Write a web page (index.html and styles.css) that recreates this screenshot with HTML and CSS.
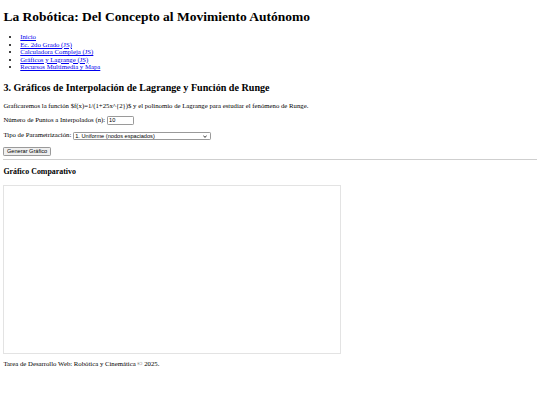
FILE: index.html
```html
<!DOCTYPE html>
<html lang="es">
<head>
<meta charset="utf-8">
<title>La Robótica</title>
<link rel="stylesheet" href="styles.css">
</head>
<body>
<header>
  <h1 class="title">La Robótica: Del Concepto al Movimiento Autónomo</h1>
  <nav>
    <ul class="nav-list">
      <li><a href="#">Inicio</a></li>
      <li><a href="#">Ec. 2do Grado (JS)</a></li>
      <li><a href="#">Calculadora Compleja (JS)</a></li>
      <li><a href="#">Gráficos y Lagrange (JS)</a></li>
      <li><a href="#">Recursos Multimedia y Mapa</a></li>
    </ul>
  </nav>
</header>
<main>
  <section>
    <h2 class="section-title">3. Gráficos de Interpolación de Lagrange y Función de Runge</h2>
    <p class="text">Graficaremos la función $f(x)=1/(1+25x^{2})$ y el polinomio de Lagrange para estudiar el fenómeno de Runge.</p>
    <p class="text">
      <label for="n">Número de Puntos a Interpolados (n):</label>
      <input class="num-input" id="n" type="text" value="10">
    </p>
    <p class="text">
      <label for="tipo">Tipo de Parametrización:</label>
      <select class="select" id="tipo">
        <option>1. Uniforme (nodos espaciados)</option>
      </select>
    </p>
    <button class="btn" type="button">Generar Gráfico</button>
    <hr class="rule">
    <h3 class="sub-title">Gráfico Comparativo</h3>
    <div class="canvas"></div>
  </section>
</main>
<footer>
  <p class="text">Tarea de Desarrollo Web: Robótica y Cinemática © 2025.</p>
</footer>
</body>
</html>
```
FILE: styles.css
```css
html {
  background: #fff;
}
body {
  margin: 3.375px;
  font-family: "Liberation Serif", "Times New Roman", serif;
  font-size: 6.75px;
  line-height: 1.107;
  color: #000;
}
.title {
  font-size: 13.5px;
  font-weight: bold;
  margin: 7px 0 8px;
}
.nav-list {
  margin: 6.75px 0;
  padding-left: 16.875px;
  list-style: disc;
}
.nav-list a {
  color: #0000ee;
  text-decoration: underline;
}
.section-title {
  font-size: 10.125px;
  font-weight: bold;
  margin: 11.4px 0 8.4px;
}
.text {
  margin: 6.75px 0;
}
.num-input {
  box-sizing: border-box;
  width: 27px;
  height: 8.6px;
  padding: 0 1.2px;
  border: 0.6px solid #9a9a9a;
  border-radius: 1.2px;
  font-family: "Liberation Sans", Arial, sans-serif;
  font-size: 5.625px;
  line-height: 1.15;
  vertical-align: middle;
}
.select {
  box-sizing: border-box;
  width: 138px;
  height: 8.2px;
  padding: 0 8px 0 1.2px;
  border: 0.6px solid #9a9a9a;
  border-radius: 1.2px;
  background-color: #fff;
  background-image: url("data:image/svg+xml,%3Csvg xmlns='http://www.w3.org/2000/svg' viewBox='0 0 10 6'%3E%3Cpath d='M1 1l4 4 4-4' fill='none' stroke='%23000' stroke-width='1.8'/%3E%3C/svg%3E");
  background-repeat: no-repeat;
  background-position: right 3.3px center;
  background-size: 4px 2.6px;
  appearance: none;
  -webkit-appearance: none;
  font-family: "Liberation Sans", Arial, sans-serif;
  font-size: 5.625px;
  line-height: 1.15;
  color: #000;
  vertical-align: middle;
}
.btn {
  box-sizing: border-box;
  height: 9px;
  padding: 0 2.6px;
  border: 0.6px solid #9a9a9a;
  border-radius: 1.2px;
  background: #efefef;
  font-family: "Liberation Sans", Arial, sans-serif;
  font-size: 5.625px;
  line-height: 1.15;
  color: #000;
  appearance: none;
  -webkit-appearance: none;
}
.rule {
  margin: 3.375px 0;
  border: 0;
  border-top: 1px solid #cfcfcf;
  height: 0;
}
.sub-title {
  font-size: 7.9px;
  font-weight: bold;
  margin: 7.9px 0;
}
.canvas {
  box-sizing: border-box;
  width: 338px;
  height: 169px;
  border: 1px solid #e3e3e3;
  background: #fff;
}
footer .text {
  margin-top: 6.75px;
}
```
